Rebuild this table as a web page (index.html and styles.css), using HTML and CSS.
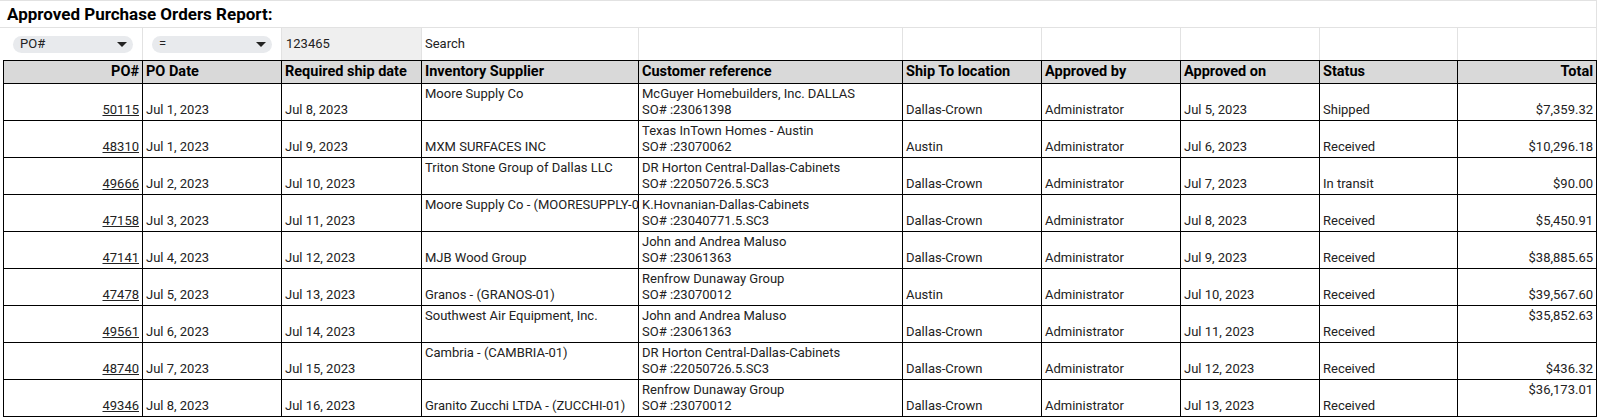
FILE: index.html
```html
<!DOCTYPE html>
<html>
<head>
<meta charset="utf-8">
<title>Approved Purchase Orders Report</title>
<link rel="stylesheet" href="styles.css">
</head>
<body>
<div class="title">Approved Purchase Orders Report:</div>
<div class="filters">
  <div class="fcell"><div class="chip"><span>PO#</span><span class="caret"></span></div></div>
  <div class="fcell"><div class="chip"><span>=</span><span class="caret"></span></div></div>
  <div class="fcell value">123465</div>
  <div class="fcell">Search</div>
  <div class="fcell"></div>
  <div class="fcell"></div>
  <div class="fcell"></div>
  <div class="fcell"></div>
  <div class="fcell"></div>
  <div class="fcell"></div>
</div>
<div class="grid">
  <div class="hcell right">PO#</div>
  <div class="hcell">PO Date</div>
  <div class="hcell">Required ship date</div>
  <div class="hcell">Inventory Supplier</div>
  <div class="hcell">Customer reference</div>
  <div class="hcell">Ship To location</div>
  <div class="hcell">Approved by</div>
  <div class="hcell">Approved on</div>
  <div class="hcell">Status</div>
  <div class="hcell right">Total</div>

  <div class="cell right"><a href="#">50115</a></div>
  <div class="cell">Jul 1, 2023</div>
  <div class="cell">Jul 8, 2023</div>
  <div class="cell top">Moore Supply Co</div>
  <div class="cell"><span>McGuyer Homebuilders, Inc. DALLAS</span><span>SO# :23061398</span></div>
  <div class="cell">Dallas-Crown</div>
  <div class="cell">Administrator</div>
  <div class="cell">Jul 5, 2023</div>
  <div class="cell">Shipped</div>
  <div class="cell right">$7,359.32</div>

  <div class="cell right"><a href="#">48310</a></div>
  <div class="cell">Jul 1, 2023</div>
  <div class="cell">Jul 9, 2023</div>
  <div class="cell">MXM SURFACES INC</div>
  <div class="cell"><span>Texas InTown Homes - Austin</span><span>SO# :23070062</span></div>
  <div class="cell">Austin</div>
  <div class="cell">Administrator</div>
  <div class="cell">Jul 6, 2023</div>
  <div class="cell">Received</div>
  <div class="cell right">$10,296.18</div>

  <div class="cell right"><a href="#">49666</a></div>
  <div class="cell">Jul 2, 2023</div>
  <div class="cell">Jul 10, 2023</div>
  <div class="cell top">Triton Stone Group of Dallas LLC</div>
  <div class="cell"><span>DR Horton Central-Dallas-Cabinets</span><span>SO# :22050726.5.SC3</span></div>
  <div class="cell">Dallas-Crown</div>
  <div class="cell">Administrator</div>
  <div class="cell">Jul 7, 2023</div>
  <div class="cell">In transit</div>
  <div class="cell right">$90.00</div>

  <div class="cell right"><a href="#">47158</a></div>
  <div class="cell">Jul 3, 2023</div>
  <div class="cell">Jul 11, 2023</div>
  <div class="cell top">Moore Supply Co - (MOORESUPPLY-01)</div>
  <div class="cell"><span>K.Hovnanian-Dallas-Cabinets</span><span>SO# :23040771.5.SC3</span></div>
  <div class="cell">Dallas-Crown</div>
  <div class="cell">Administrator</div>
  <div class="cell">Jul 8, 2023</div>
  <div class="cell">Received</div>
  <div class="cell right">$5,450.91</div>

  <div class="cell right"><a href="#">47141</a></div>
  <div class="cell">Jul 4, 2023</div>
  <div class="cell">Jul 12, 2023</div>
  <div class="cell">MJB Wood Group</div>
  <div class="cell"><span>John and Andrea Maluso</span><span>SO# :23061363</span></div>
  <div class="cell">Dallas-Crown</div>
  <div class="cell">Administrator</div>
  <div class="cell">Jul 9, 2023</div>
  <div class="cell">Received</div>
  <div class="cell right">$38,885.65</div>

  <div class="cell right"><a href="#">47478</a></div>
  <div class="cell">Jul 5, 2023</div>
  <div class="cell">Jul 13, 2023</div>
  <div class="cell">Granos - (GRANOS-01)</div>
  <div class="cell"><span>Renfrow Dunaway Group</span><span>SO# :23070012</span></div>
  <div class="cell">Austin</div>
  <div class="cell">Administrator</div>
  <div class="cell">Jul 10, 2023</div>
  <div class="cell">Received</div>
  <div class="cell right">$39,567.60</div>

  <div class="cell right"><a href="#">49561</a></div>
  <div class="cell">Jul 6, 2023</div>
  <div class="cell">Jul 14, 2023</div>
  <div class="cell top">Southwest Air Equipment, Inc.</div>
  <div class="cell"><span>John and Andrea Maluso</span><span>SO# :23061363</span></div>
  <div class="cell">Dallas-Crown</div>
  <div class="cell">Administrator</div>
  <div class="cell">Jul 11, 2023</div>
  <div class="cell">Received</div>
  <div class="cell right top">$35,852.63</div>

  <div class="cell right"><a href="#">48740</a></div>
  <div class="cell">Jul 7, 2023</div>
  <div class="cell">Jul 15, 2023</div>
  <div class="cell top">Cambria - (CAMBRIA-01)</div>
  <div class="cell"><span>DR Horton Central-Dallas-Cabinets</span><span>SO# :22050726.5.SC3</span></div>
  <div class="cell">Dallas-Crown</div>
  <div class="cell">Administrator</div>
  <div class="cell">Jul 12, 2023</div>
  <div class="cell">Received</div>
  <div class="cell right">$436.32</div>

  <div class="cell right"><a href="#">49346</a></div>
  <div class="cell">Jul 8, 2023</div>
  <div class="cell">Jul 16, 2023</div>
  <div class="cell">Granito Zucchi LTDA - (ZUCCHI-01)</div>
  <div class="cell"><span>Renfrow Dunaway Group</span><span>SO# :23070012</span></div>
  <div class="cell">Dallas-Crown</div>
  <div class="cell">Administrator</div>
  <div class="cell">Jul 13, 2023</div>
  <div class="cell">Received</div>
  <div class="cell right top">$36,173.01</div>
</div>
</body>
</html>
```
FILE: styles.css
```css
* { box-sizing: border-box; }
html, body { margin: 0; padding: 0; background: #fff; }
body {
  font-family: Roboto, "Liberation Sans", Arial, sans-serif;
  font-size: 13px;
  color: #222;
}
.title {
  height: 28px;
  width: 1597px;
  border-top: 1px solid #e2e2e2;
  border-bottom: 1px solid #e2e2e2;
  border-right: 1px solid #e2e2e2;
  padding: 3px 0 0 7px;
  font-weight: 700;
  font-size: 17px;
  line-height: 20px;
  color: #000;
}
.filters, .grid {
  display: grid;
  grid-template-columns: 139px 139px 140px 217px 264px 139px 139px 139px 138px 139px;
  margin-left: 3px;
  width: 1594px;
}
.filters {
  padding-left: 1px;
}
.fcell {
  height: 32px;
  border-right: 1px solid #e2e2e2;
  padding: 0 3px;
  line-height: 16px;
  display: flex;
  align-items: center;
  white-space: nowrap;
  overflow: hidden;
}
.fcell.value { background: #efefef; padding-left: 4px; }
.chip {
  margin-left: 6px;
  width: 120px;
  height: 17px;
  border-radius: 9px;
  background: #e8eaed;
  display: flex;
  align-items: center;
  justify-content: space-between;
  padding: 0 6px 0 7px;
  color: #222;
}
.caret {
  width: 0;
  height: 0;
  border-left: 5px solid transparent;
  border-right: 5px solid transparent;
  border-top: 5px solid #222;
}
.grid {
  border-left: 1px solid #000;
  border-top: 1px solid #000;
}
.hcell, .cell {
  border-right: 1px solid #000;
  border-bottom: 1px solid #000;
  padding: 2px 3px;
  line-height: 16px;
  display: flex;
  flex-direction: column;
  justify-content: flex-end;
  white-space: nowrap;
  overflow: hidden;
}
.hcell {
  height: 23px;
  background: #d9d9d9;
  font-weight: 700;
  font-size: 14.5px;
  line-height: 18px;
  padding-top: 1px;
  padding-bottom: 2px;
  color: #000;
}
.cell { height: 37px; }
.cell.top { justify-content: flex-start; }
.right { align-items: flex-end; text-align: right; }
.cell a { color: #222; text-decoration: underline; }
```
